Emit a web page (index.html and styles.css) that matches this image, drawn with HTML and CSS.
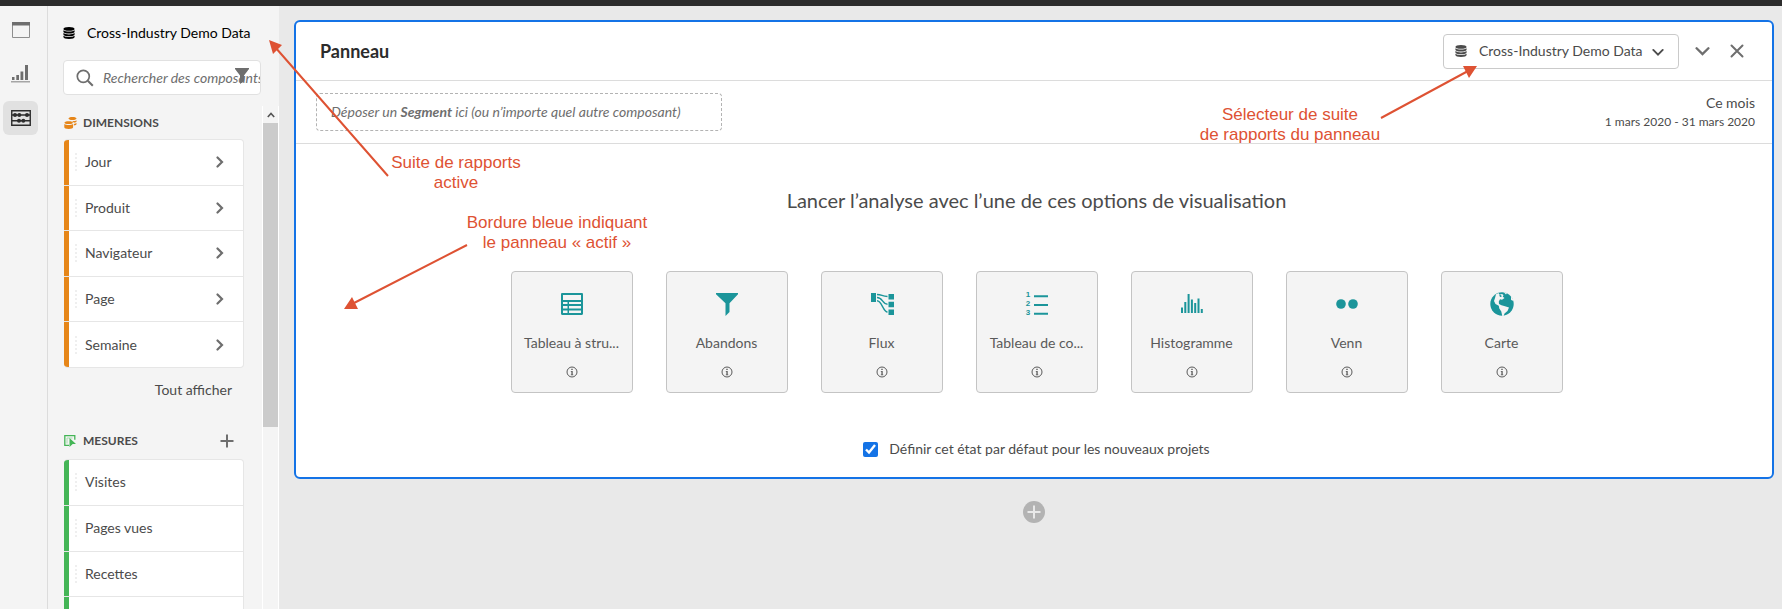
FILE: index.html
```html
<!DOCTYPE html>
<html lang="fr">
<head>
<meta charset="utf-8">
<title>Panneau</title>
<link rel="stylesheet" href="styles.css">
</head>
<body>
<svg class="defs" width="0" height="0" aria-hidden="true">
  <symbol id="db" viewBox="0 0 12 12"><path d="M6 0C2.6 0 .4.8.4 1.9S2.600 3.700 6 3.700s5.600-.7 5.600-1.800S9.400 0 6 0zM.4 3.300v1.500C.4 5.900 2.600 6.600 6 6.600s5.600-.7 5.600-1.800V3.300C10.500 4.200 8.500 4.600 6 4.600S1.500 4.200.4 3.300zM.4 6.100v1.400C.4 8.600 2.600 9.300 6 9.300s5.600-.7 5.600-1.800V6.100C10.500 7 8.500 7.400 6 7.400S1.500 7 .4 6.100zM.4 8.800v1.300C.4 11.300 2.600 12 6 12s5.600-.7 5.600-1.900V8.800c-1.100.9-3.100 1.300-5.600 1.300S1.500 9.700.4 8.800z"/></symbol>
  <symbol id="chev" viewBox="0 0 8 12"><path d="M1.500 1.500 6 6l-4.500 4.500" fill="none" stroke="currentColor" stroke-width="2.200" stroke-linecap="round"/></symbol>
  <symbol id="down" viewBox="0 0 14 10"><path d="M1.500 2 7 7.500 12.500 2" fill="none" stroke="currentColor" stroke-width="2.200" stroke-linecap="round"/></symbol>
  <symbol id="info" viewBox="0 0 12 12"><circle cx="6" cy="6" r="5" fill="none" stroke="currentColor"/><path d="M5.300 2.700h1.400v1.300H5.300zM4.800 5h1.900v3.400h.6v.8H4.800v-.8h.6V5.800h-.6z"/></symbol>
</svg>

<div class="topbar"></div>
<div class="app">
  <nav class="rail" aria-label="Outils">
    <button class="rail-btn" aria-label="Panneaux"><svg width="18" height="16" viewBox="0 0 18 16"><path d="M.5.500h17v15H.5z" fill="none" stroke="#8e8e8e"/><path d="M0 0h18v3.500H0z" fill="#6e6e6e"/></svg></button>
    <button class="rail-btn" aria-label="Visualisations"><svg width="19" height="18" viewBox="0 0 19 18"><path d="M1 12h2.500v3H1zM5.300 10h2.700v5H5.300zM9.500 6.500h2.800V15H9.500zM14 0h3v15h-3z" fill="#6e6e6e"/><path d="M0 16h19v1.500H0z" fill="#a5a5a5"/></svg></button>
    <button class="rail-btn active" aria-label="Composants"><svg width="20" height="16" viewBox="0 0 20 16"><path d="M.75.750h18.500v14.500H.75zM1 5h18M1 10.700h18" fill="none" stroke="#2c2c2c" stroke-width="1.400"/><g fill="#2c2c2c"><circle cx="4" cy="5" r="2"/><circle cx="8.300" cy="5" r="2"/><circle cx="16" cy="5" r="2"/><circle cx="8" cy="10.700" r="2"/><circle cx="12.300" cy="10.700" r="2"/></g></svg></button>
  </nav>

  <aside class="sidebar">
    <div class="suite"><svg width="12" height="12"><use href="#db"/></svg><span>Cross-Industry Demo Data</span></div>
    <div class="search">
      <svg width="18" height="18" viewBox="0 0 18 18"><circle cx="7.300" cy="7.300" r="6" fill="none" stroke="#6e6e6e" stroke-width="1.700"/><path d="m11.800 11.800 5 5" stroke="#6e6e6e" stroke-width="2"/></svg>
      <input type="text" placeholder="Rechercher des composants" aria-label="Rechercher des composants">
      <button class="filter" aria-label="Filtrer"><svg width="14" height="16" viewBox="0 0 14 16"><path d="M0 0h14v1L9 7.500V13l-4 3V7.500L0 1z" fill="#6e6e6e"/></svg></button>
    </div>
    <div class="scroll-area">
      <div class="components">
        <section class="dimensions">
          <h2><svg class="dim-icon" width="13" height="12" viewBox="0 0 13 12"><path d="M8.500 0C6 0 4.500.6 4.500 1.500S6 3 8.500 3s4-.6 4-1.500S11 0 8.500 0zM12.500 3.200c-1 .7-2.800.9-5 .8 1.400.4 2.200 1 2.300 1.800 1.800-.2 2.700-.7 2.700-1.300zM12.500 6c-.6.500-1.500.8-2.600.9v1.600c1.700-.2 2.600-.7 2.600-1.200zM4.700 4.300C2 4.300.5 4.900.5 5.700S2 7.100 4.700 7.100s4.200-.6 4.200-1.400-1.500-1.400-4.200-1.400zM.3 7v3.300C.3 11.300 2 12 4.700 12s4.400-.7 4.400-1.700V7C8 7.800 6.500 8 4.700 8S1.400 7.800.3 7z"/></svg>DIMENSIONS</h2>
          <ul class="list">
            <li><button><span>Jour</span><svg width="8" height="12"><use href="#chev"/></svg></button></li>
            <li><button><span>Produit</span><svg width="8" height="12"><use href="#chev"/></svg></button></li>
            <li><button><span>Navigateur</span><svg width="8" height="12"><use href="#chev"/></svg></button></li>
            <li><button><span>Page</span><svg width="8" height="12"><use href="#chev"/></svg></button></li>
            <li><button><span>Semaine</span><svg width="8" height="12"><use href="#chev"/></svg></button></li>
          </ul>
          <button class="show-all">Tout afficher</button>
        </section>
        <section class="metrics">
          <h2><svg width="13" height="12" viewBox="0 0 13 12"><path d="M5 10.300H.8V.7h10v4" fill="none" stroke="#44b556" stroke-width="1.300"/><path d="M3 8.500V3h5.500" fill="none" stroke="#a9dbb0"/><path d="m5.500 3 6.500 6H8.700L5.500 12z" fill="#44b556"/></svg>MESURES<button class="add-metric" aria-label="Ajouter"><svg width="14" height="14" viewBox="0 0 14 14"><path d="M7 .500v13M.5 7h13" stroke="#6e6e6e" stroke-width="2"/></svg></button></h2>
          <ul class="list">
            <li><button><span>Visites</span></button></li>
            <li><button><span>Pages vues</span></button></li>
            <li><button><span>Recettes</span></button></li>
            <li><button><span></span></button></li>
          </ul>
        </section>
      </div>
      <div class="scrollbar"><svg width="8" height="6" viewBox="0 0 8 6"><path d="M.8 5 4 1.500 7.200 5" fill="none" stroke="#555" stroke-width="1.600"/></svg><div class="thumb"></div></div>
    </div>
  </aside>

  <main class="workspace">
    <section class="panel">
      <header class="panel-head">
        <h1>Panneau</h1>
        <label class="picker">
          <svg class="picker-db" width="12" height="12"><use href="#db"/></svg>
          <select aria-label="Suite de rapports"><option>Cross-Industry Demo Data</option></select>
          <svg class="picker-down" width="12" height="9"><use href="#down"/></svg>
        </label>
        <button class="icon-btn" aria-label="Réduire"><svg width="15" height="11"><use href="#down"/></svg></button>
        <button class="icon-btn" aria-label="Fermer"><svg width="14" height="14" viewBox="0 0 14 14"><path d="m1.500 1.500 11 11m0-11-11 11" stroke="#6e6e6e" stroke-width="2" stroke-linecap="round"/></svg></button>
      </header>
      <div class="segment-row">
        <div class="dropzone">Déposer un <b>Segment</b> ici (ou n’importe quel autre composant)</div>
        <div class="date"><span>Ce mois</span><small>1 mars 2020 - 31 mars 2020</small></div>
      </div>
      <div class="start">
        <h2>Lancer l’analyse avec l’une de ces options de visualisation</h2>
        <div class="cards">
          <button class="card"><svg class="viz" width="24" height="24" viewBox="0 0 24 24"><path d="M2.200 1h19.600c.7 0 1.200.5 1.200 1.200v19.600c0 .7-.5 1.200-1.200 1.200H2.200c-.7 0-1.200-.5-1.200-1.200V2.200C1 1.500 1.500 1 2.200 1zM3 3v5h18V3zM3 10v2h4.500v-2zm6 0v2h12v-2zm-6 4v2.500h4.500V14zm6 0v2.500h12V14zm-6 4.500V21h4.500v-2.500zm6 0V21h12v-2.500z" fill-rule="evenodd"/></svg><span>Tableau à stru...</span><svg class="info" width="12" height="12"><use href="#info"/></svg></button>
          <button class="card"><svg class="viz" width="24" height="24" viewBox="0 0 24 24"><path d="M1 1h22v1.200l-8.500 9V20l-4 4V11.200L1 2.200z"/></svg><span>Abandons</span><svg class="info" width="12" height="12"><use href="#info"/></svg></button>
          <button class="card"><svg class="viz" width="24" height="24" viewBox="0 0 24 24"><path d="M1 1h5v9H1zM18.500 2h5.500v5.500h-5.500zM18.500 9.700h5.500v5.500h-5.500zM18.500 17.500h5.500V23h-5.500z"/><path d="M7 2.500c5 0 5 2 10.500 2M7 5.500c6 0 5 6.700 10.500 6.700M7 8.800c5 0 6 11.200 10.500 11.200" fill="none" stroke="currentColor" stroke-width="1.400"/></svg><span>Flux</span><svg class="info" width="12" height="12"><use href="#info"/></svg></button>
          <button class="card"><svg class="viz" width="24" height="24" viewBox="0 0 24 24"><path d="M9 3.200h14v2H9zM9 12h14v2H9zM9 20.700h14v2H9z"/><g class="digits"><text x="3" y="5">1</text><text x="3" y="14">2</text><text x="3" y="23">3</text></g></svg><span>Tableau de co...</span><svg class="info" width="12" height="12"><use href="#info"/></svg></button>
          <button class="card"><svg class="viz" width="24" height="24" viewBox="0 0 24 24"><path d="M1 15.500h2V21H1zM4.300 10h2v11h-2zM7.600 2h2v19h-2zM10.900 7.500h2V21h-2zM14.200 11h2v10h-2zM17.500 6.500h2V21h-2zM20.800 17h2v4h-2z"/></svg><span>Histogramme</span><svg class="info" width="12" height="12"><use href="#info"/></svg></button>
          <button class="card"><svg class="viz" width="24" height="24" viewBox="0 0 24 24"><circle cx="6" cy="12" r="4.800"/><circle cx="18" cy="12" r="4.800"/></svg><span>Venn</span><svg class="info" width="12" height="12"><use href="#info"/></svg></button>
          <button class="card"><svg class="viz" width="24" height="24" viewBox="0 0 24 24"><circle cx="12" cy="12" r="11.700"/><path fill="#f4f4f4" d="M6 2.200 8.500 1l1 1.800L12 2l1.500 1-.7 1.800 1.700 1.200L12 7.800l-2-.5L8.800 9.500 9 12l2.500 1.200 3.500 1 4 1.300-1.500 3.500-3 2.500-1 2.800h-1.200l-1-4.800-2-3-.5-2.800L5.500 12 4 9 5 6z"/><path fill="#f4f4f4" d="m21 4 2.500 4-1 .7-1.500-1zM13.500 0 17 1l-1 1.500z"/><path d="M9 3.500 11 3l.8 1.500L10.300 5z"/></svg><span>Carte</span><svg class="info" width="12" height="12"><use href="#info"/></svg></button>
        </div>
        <label class="default"><input type="checkbox" checked>Définir cet état par défaut pour les nouveaux projets</label>
      </div>
    </section>
    <button class="add-panel" aria-label="Ajouter un panneau"><svg width="22" height="22" viewBox="0 0 22 22"><circle cx="11" cy="11" r="11" fill="#b3b3b3"/><path d="M11 4.500v13M4.500 11h13" stroke="#e9e9e9" stroke-width="2"/></svg></button>
  </main>
</div>

<div class="notes">
  <svg class="arrows" width="1782" height="609" viewBox="0 0 1782 609">
    <g stroke="#de5233" stroke-width="2"><path d="M388 176 275 47M467 245 354 303M1381 118l87-47"/></g>
    <path fill="#de5233" d="m269 40 13 5-9 9zM344 309l8-12 6 12zM1477 66h-14l6 12z"/>
  </svg>
  <p class="note note-suite">Suite de rapports<br>active</p>
  <p class="note note-border">Bordure bleue indiquant<br>le panneau « actif »</p>
  <p class="note note-picker">Sélecteur de suite<br>de rapports du panneau</p>
</div>
</body>
</html>
```
FILE: styles.css
```css
* { box-sizing: border-box; }
body {
  margin: 0;
  height: 100vh;
  display: flex;
  flex-direction: column;
  overflow: hidden;
  position: relative;
  font: 14px/20px Lato, "Noto Sans", sans-serif;
  color: #4b4b4b;
  background: #e9e9e9;
}
button, input, select { font: inherit; color: inherit; }
button { border: 0; padding: 0; background: none; cursor: pointer; }
h1, h2, ul, p { margin: 0; padding: 0; }
svg { display: block; flex: none; fill: currentColor; }
.defs { position: absolute; }

.topbar { flex: none; height: 6px; background: #2c2c2c; }
.app { flex: 1; min-height: 0; display: flex; }

.rail {
  flex: none;
  width: 48px;
  padding: 7px 0 0 3px;
  display: flex;
  flex-direction: column;
  gap: 10px;
  background: #f4f4f4;
  border-right: 1px solid #dcdcdc;
}
.rail-btn {
  width: 35px;
  height: 34px;
  display: grid;
  place-items: center;
  border-radius: 6px;
}
.rail-btn.active { background: #e1e1e1; }

.sidebar {
  flex: none;
  width: 231px;
  display: flex;
  flex-direction: column;
  background: #f4f4f4;
}
.suite {
  display: flex;
  align-items: center;
  gap: 12px;
  margin: 17px 0 0 15px;
  color: #000;
  white-space: nowrap;
}
.search {
  position: relative;
  flex: none;
  width: 198px;
  height: 35px;
  margin: 17px 0 11px 15px;
  padding-left: 12px;
  display: flex;
  align-items: center;
  gap: 9px;
  background: #fff;
  border: 1px solid #e1e1e1;
  border-radius: 4px;
  overflow: hidden;
}
.search input {
  flex: 1;
  min-width: 0;
  padding: 0;
  border: 0;
  outline: 0;
  background: none;
  font-style: italic;
}
.search input::placeholder { color: #6e6e6e; opacity: 1; }
.filter { position: absolute; right: 11px; top: 7px; }

.scroll-area { flex: 1; min-height: 0; display: flex; overflow: hidden; }
.components { flex: 1; padding: 7px 18px 0 16px; }
.components h2 {
  display: flex;
  align-items: center;
  gap: 6px;
  height: 20px;
  font-size: 12px;
  line-height: 20px;
}
.dim-icon { color: #e68619; }
.list {
  height: 229px;
  margin-top: 6px;
  display: flex;
  flex-direction: column;
  list-style: none;
  background: #fff;
  border: 1px solid #e6e6e6;
  border-left: 0;
  border-radius: 4px;
  overflow: hidden;
}
.list li { flex: 1; display: flex; }
.list li + li { border-top: 1px solid #e6e6e6; }
.list button {
  flex: 1;
  padding: 0 19px 0 16px;
  display: flex;
  align-items: center;
  justify-content: space-between;
  border-left: 5px solid #e68619;
  color: #4b4b4b;
  background: repeating-linear-gradient(#efefef 0 2px, #fff 2px 4px) 6px 50% / 2px 18px no-repeat;
}
.list svg { color: #6e6e6e; }
.metrics .list button { border-left-color: #44b556; }
.show-all { display: block; margin: 12px 12px 0 auto; height: 20px; }
.metrics { margin-top: 31px; }
.metrics .list { height: 184px; margin-top: 8px; }
.add-metric { margin-left: auto; padding-right: 10px; }

.scrollbar {
  flex: none;
  width: 17px;
  padding-top: 6px;
  border-left: 1px solid #fff;
  border-right: 1px solid #fff;
  display: flex;
  flex-direction: column;
  align-items: center;
  gap: 5px;
}
.thumb { width: 15px; height: 304px; background: #cbcbcb; }

.workspace {
  flex: 1;
  min-width: 0;
  padding: 14px 8px 0 15px;
  display: flex;
  flex-direction: column;
  align-items: center;
}
.panel {
  width: 100%;
  background: #fff;
  border: 2px solid #1473e6;
  border-radius: 6px;
}
.panel-head {
  display: flex;
  align-items: center;
  height: 59px;
  padding: 0 20px 0 24px;
  border-bottom: 1px solid #dcdcdc;
}
.panel-head h1 {
  margin-right: auto;
  font-size: 18px;
  line-height: 24px;
  font-weight: 700;
  color: #2c2c2c;
}
.picker { position: relative; margin-right: 5px; }
.picker svg { position: absolute; pointer-events: none; }
.picker-db { left: 12px; top: 11px; }
.picker-down { right: 15px; top: 14px; }
.picker select {
  display: block;
  appearance: none;
  width: 236px;
  height: 35px;
  padding: 0 28px 0 35px;
  border: 1px solid #cacaca;
  border-radius: 4px;
  background: #fff;
}
.icon-btn { width: 31px; height: 32px; margin-left: 3px; display: grid; place-items: center; color: #6e6e6e; }

.segment-row {
  display: flex;
  align-items: center;
  justify-content: space-between;
  padding: 12px 17px 12px 20px;
  border-bottom: 1px solid #dcdcdc;
}
.dropzone {
  width: 406px;
  height: 38px;
  padding: 8px 14px;
  border: 1px dashed #b3b3b3;
  border-radius: 4px;
  font-style: italic;
  color: #6e6e6e;
  white-space: nowrap;
}
.date { display: flex; flex-direction: column; align-items: flex-end; }
.date small { font-size: 12px; line-height: 18px; }

.start {
  display: flex;
  flex-direction: column;
  align-items: center;
  padding: 40px 0 18px 5px;
}
.start h2 { font-size: 20px; line-height: 32px; font-weight: 400; }
.cards { display: flex; gap: 33px; margin-top: 55px; }
.card {
  width: 122px;
  height: 122px;
  padding: 20px 8px 0;
  display: flex;
  flex-direction: column;
  align-items: center;
  background: #f4f4f4;
  border: 1px solid #c4c4c4;
  border-radius: 4px;
  color: #5a5a5a;
  white-space: nowrap;
}
.viz { height: 24px; overflow: visible; color: #1b959a; }
.card span { margin: 17px 0 13px; }
.digits { font: 700 8px/8px "Liberation Sans", sans-serif; text-anchor: middle; }
.default { display: flex; align-items: center; gap: 11px; margin-top: 46px; }
.default input { width: 15px; height: 15px; margin: 0; accent-color: #1473e6; }
.add-panel { margin-top: 22px; }

.notes { position: absolute; inset: 0; pointer-events: none; overflow: hidden; }
.arrows { position: absolute; left: 0; top: 0; }
.note {
  position: absolute;
  width: 200px;
  text-align: center;
  font: 17px/20px "Liberation Sans", Arial, sans-serif;
  color: #de5233;
}
.note-suite { left: 356px; top: 153px; }
.note-border { left: 457px; top: 213px; }
.note-picker { left: 1190px; top: 105px; }
```
